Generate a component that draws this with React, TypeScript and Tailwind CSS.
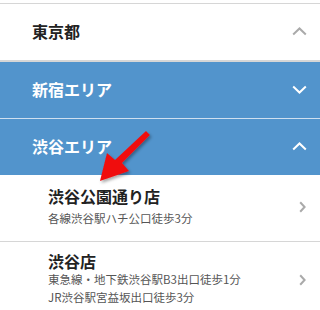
const font = { fontFamily: '"Noto Sans CJK JP", "Noto Sans", sans-serif' };

function Chevron({ dir, className }: { dir: "up" | "down" | "right"; className: string }) {
  if (dir === "right") {
    return (
      <svg width="7" height="12" viewBox="0 0 7 12" className={className}>
        <polyline points="1.2,1.2 5.6,6 1.2,10.8" fill="none" stroke="currentColor" strokeWidth="2" />
      </svg>
    );
  }
  return (
    <svg width="15" height="9" viewBox="0 0 15 9" className={className}>
      <polyline
        points={dir === "up" ? "1.2,7.5 7.5,1.5 13.8,7.5" : "1.2,1.5 7.5,7.5 13.8,1.5"}
        fill="none"
        stroke="currentColor"
        strokeWidth="2"
      />
    </svg>
  );
}

function AreaRow({ label, open, blue }: { label: string; open: boolean; blue?: boolean }) {
  return (
    <div
      className={
        blue
          ? "flex h-[56px] items-center justify-between bg-[#5294cc] pb-[2px] pl-[32px] pr-[13px] text-white"
          : "flex h-[56px] items-center justify-between bg-white pb-[2px] pl-[32px] pr-[13px] text-[#222]"
      }
    >
      <span className="text-[16px] font-bold leading-none">{label}</span>
      <Chevron dir={open ? "up" : "down"} className={blue ? "text-white" : "text-[#aaa]"} />
    </div>
  );
}

export default function App() {
  return (
    <div className="relative h-[310px] w-[320px] overflow-hidden bg-white" style={font}>
      <div className="h-[3px] bg-white" />
      <div className="border-t border-[#d6d6d6]">
        <AreaRow label="東京都" open />
      </div>
      <div className="border-t-2 border-[#d6d6d6]">
        <AreaRow label="新宿エリア" open={false} blue />
      </div>
      <div className="border-t border-[#cfe0f0]">
        <AreaRow label="渋谷エリア" open blue />
      </div>

      <div className="flex items-center justify-between pb-[14px] pl-[48px] pr-[14px] pt-[11px]">
        <div className="flex flex-col">
          <span className="text-[16px] font-bold leading-[20px] text-[#222]">渋谷公園通り店</span>
          <span className="mt-[3px] text-[11.5px] leading-[18px] text-[#555]">各線渋谷駅ハチ公口徒歩3分</span>
        </div>
        <Chevron dir="right" className="text-[#aaa]" />
      </div>

      <div className="flex items-center justify-between border-t border-[#d6d6d6] pl-[48px] pr-[14px] pt-[11px]">
        <div className="flex flex-col">
          <span className="text-[16px] font-bold leading-[17px] text-[#222]">渋谷店</span>
          <span className="text-[11.5px] leading-[18px] text-[#555]">東急線・地下鉄渋谷駅B3出口徒歩1分</span>
          <span className="text-[11.5px] leading-[18px] text-[#555]">JR渋谷駅宮益坂出口徒歩3分</span>
        </div>
        <Chevron dir="right" className="text-[#aaa]" />
      </div>

      {/* red annotation arrow */}
      <svg
        className="pointer-events-none absolute left-0 top-0"
        width="320"
        height="310"
        viewBox="0 0 320 310"
      >
        <defs>
          <filter id="sh" x="-20%" y="-20%" width="140%" height="140%">
            <feDropShadow dx="1.5" dy="2" stdDeviation="1.5" floodColor="#000" floodOpacity="0.35" />
          </filter>
        </defs>
        <polygon
          points="146,131 150,135 122,163 129,171 100,181 107,153 115,160"
          fill="#f01010"
          filter="url(#sh)"
        />
      </svg>
    </div>
  );
}
